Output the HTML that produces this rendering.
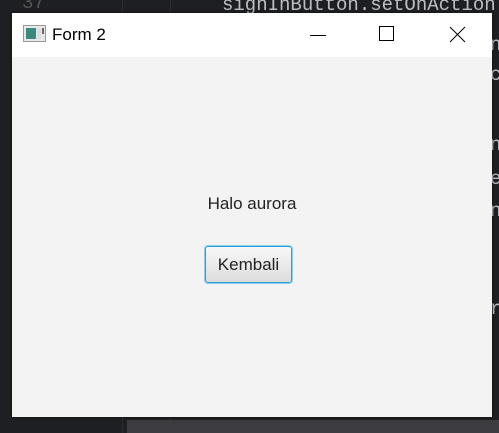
<!DOCTYPE html>
<html><head><style>
body{margin:0;width:499px;height:433px;background:#1e1f22;position:relative;overflow:hidden;font-family:"Segoe UI","Liberation Sans",sans-serif}
.code{position:absolute;color:#bcbec4;font-family:"Liberation Mono",monospace;font-size:19px;white-space:pre}
.win{position:absolute;left:12px;top:13px;width:480px;height:404px;background:#f3f3f3;box-shadow:0 0 3px rgba(0,0,0,.6)}
.tb{height:44px;background:#fff;position:relative}
.title{position:absolute;left:40px;top:12px;font-size:17px;color:#000;font-family:"Liberation Sans",sans-serif}
.btn{position:absolute;left:193px;top:233px;width:85px;height:35px;border:1px solid #2a9fd6;border-radius:3px;background:linear-gradient(#f8f8f8,#dcdcdc);box-shadow:0 0 0 1px #8fd0ef;font-size:17px;color:#222;text-align:center;line-height:35px;font-family:"Liberation Sans",sans-serif}
</style></head><body>
<div style="position:absolute;left:122px;top:0;width:1px;height:433px;background:#2b2d30"></div>
<div style="position:absolute;left:170px;top:0;width:1px;height:433px;background:#2b2d30"></div>
<div class="code" style="left:222px;top:-6px">signInButton.setOnAction</div>
<div class="code" style="left:22px;top:-8px;color:#555">37</div>
<div class="code" style="left:490px;top:34px">n</div>
<div class="code" style="left:490px;top:64px">c</div>
<div class="code" style="left:490px;top:134px">n</div>
<div class="code" style="left:490px;top:168px">e</div>
<div class="code" style="left:490px;top:200px">n</div>
<div class="code" style="left:490px;top:298px">r</div>
<div style="position:absolute;left:127px;top:420px;width:372px;height:13px;background:#3c3c40"></div>
<div class="win">
<div class="tb">
<svg style="position:absolute;left:11px;top:12px" width="23" height="17"><rect x=".5" y=".5" width="22" height="16" fill="#e8e8e8" stroke="#999"/><rect x="3" y="3" width="10" height="11" fill="#3a8a80"/><rect x="14" y="3" width="4" height="11" fill="#ddd"/><rect x="19" y="3" width="2" height="6" fill="#666"/></svg>
<div class="title">Form 2</div>
<svg style="position:absolute;left:298px;top:14px" width="20" height="16"><line x1="0" y1="8.5" x2="16" y2="8.5" stroke="#000"/></svg>
<svg style="position:absolute;left:367px;top:13px" width="16" height="16"><rect x=".5" y=".5" width="14" height="14" fill="none" stroke="#000"/></svg>
<svg style="position:absolute;left:437px;top:13px" width="17" height="17"><path d="M1 1L16 16M16 1L1 16" stroke="#000"/></svg>
</div>
<div style="position:absolute;left:0;width:480px;top:181px;text-align:center;font-size:17px;color:#222;font-family:'Liberation Sans',sans-serif">Halo aurora</div>
<div class="btn">Kembali</div>
</div>
</body></html>
